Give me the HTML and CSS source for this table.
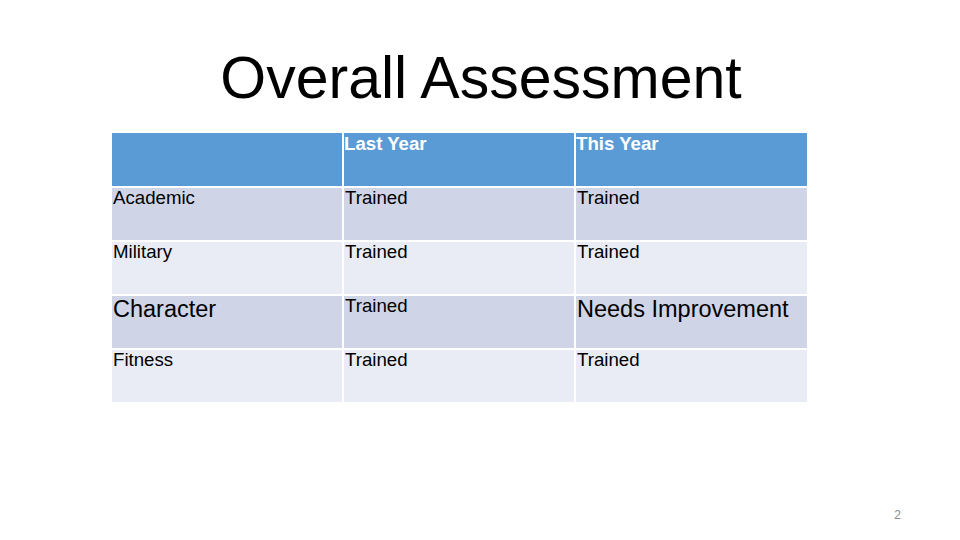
FILE: index.html
```html
<!DOCTYPE html>
<html>
<head>
<meta charset="utf-8">
<link rel="stylesheet" href="styles.css">
</head>
<body>
<div class="slide">
  <h1 class="title">Overall Assessment</h1>
  <div class="table">
    <div class="cell head"></div>
    <div class="cell head">Last Year</div>
    <div class="cell head">This Year</div>

    <div class="cell odd">Academic</div>
    <div class="cell odd">Trained</div>
    <div class="cell odd">Trained</div>

    <div class="cell even">Military</div>
    <div class="cell even">Trained</div>
    <div class="cell even">Trained</div>

    <div class="cell odd big">Character</div>
    <div class="cell odd">Trained</div>
    <div class="cell odd big">Needs Improvement</div>

    <div class="cell even">Fitness</div>
    <div class="cell even">Trained</div>
    <div class="cell even">Trained</div>
  </div>
  <div class="footer">2</div>
</div>
</body>
</html>
```
FILE: styles.css
```css
html, body {
  margin: 0;
  padding: 0;
  background: #ffffff;
}
.slide {
  width: 960px;
  height: 540px;
  display: flex;
  flex-direction: column;
  font-family: "Liberation Sans", Arial, sans-serif;
  color: #000000;
}
.title {
  margin: 44px 0 0 0;
  font-size: 59px;
  font-weight: normal;
  line-height: 68px;
  text-align: center;
  padding-left: 2px;
}
.table {
  margin: 21px 0 0 112px;
  display: grid;
  grid-template-columns: 230px 230px 231px;
  grid-template-rows: 53px 52px 52px 52px 52px;
  gap: 2px;
  width: 695px;
}
.cell {
  padding: 0 0 0 1px;
  font-size: 18.67px;
  line-height: 19px;
  box-sizing: border-box;
}
.head {
  background: #5b9bd5;
  color: #ffffff;
  font-weight: bold;
  padding: 1px 0 0 0;
}
.odd {
  background: #cfd5e7;
}
.even {
  background: #e9ecf4;
}
.big {
  font-size: 23.5px;
  line-height: 26px;
}
.footer {
  margin-top: auto;
  padding: 0 59px 18px 0;
  text-align: right;
  font-size: 12px;
  color: #8a8a8a;
  line-height: 14px;
}
```
